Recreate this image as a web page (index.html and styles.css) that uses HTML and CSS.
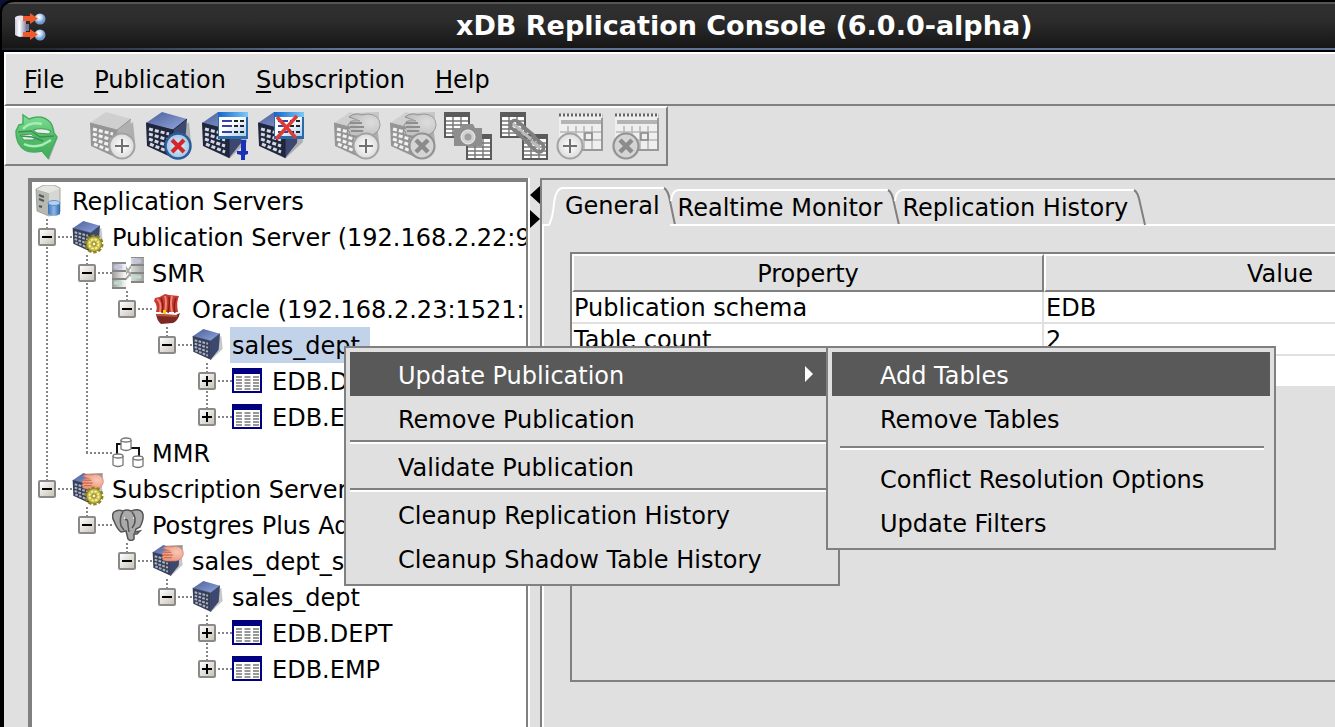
FILE: index.html
```html
<!DOCTYPE html>
<html lang="en">
<head>
<meta charset="utf-8">
<title>xDB Replication Console (6.0.0-alpha)</title>
<link rel="stylesheet" href="styles.css">
</head>
<body>
<svg class="defs" aria-hidden="true">
  <defs>
    <linearGradient id="gTopBlue" x1="0" y1="0" x2="1" y2="1"><stop offset="0" stop-color="#4a5f9c"/><stop offset="1" stop-color="#93a8dd"/></linearGradient>
    <linearGradient id="gGreen" x1="0" y1="0" x2="0" y2="1"><stop offset="0" stop-color="#7fe096"/><stop offset=".5" stop-color="#58bb6c"/><stop offset="1" stop-color="#3fae58"/></linearGradient>
    <linearGradient id="gBar" x1="0" y1="0" x2="1" y2="0"><stop offset="0" stop-color="#1467c8"/><stop offset="1" stop-color="#7cc8fb"/></linearGradient>
    <linearGradient id="gSheet" x1="0" y1="0" x2="1" y2="1"><stop offset=".4" stop-color="#fff"/><stop offset="1" stop-color="#a9cdf0"/></linearGradient>
    <linearGradient id="gMetal" x1="0" y1="0" x2="1" y2="0"><stop offset="0" stop-color="#9a9a9a"/><stop offset=".4" stop-color="#f4f4f4"/><stop offset="1" stop-color="#a2a2a2"/></linearGradient>
    <linearGradient id="gCyl" x1="0" y1="0" x2="1" y2="0"><stop offset="0" stop-color="#c5c5dc"/><stop offset=".4" stop-color="#fff"/><stop offset="1" stop-color="#8888a8"/></linearGradient>
    <linearGradient id="gBlueCyl" x1="0" y1="0" x2="1" y2="0"><stop offset="0" stop-color="#3c74b8"/><stop offset=".5" stop-color="#8db8e6"/><stop offset="1" stop-color="#2c66ac"/></linearGradient>
    <radialGradient id="gDisc"><stop offset="0" stop-color="#fff"/><stop offset="1" stop-color="#dcdcdc"/></radialGradient>
    <radialGradient id="gDiscBlue"><stop offset="0" stop-color="#e6f1fb"/><stop offset="1" stop-color="#9fc3e4"/></radialGradient>
    <radialGradient id="gBall" cx=".4" cy=".35"><stop offset="0" stop-color="#fff"/><stop offset=".5" stop-color="#c8dcf4"/><stop offset="1" stop-color="#6f9bd0"/></radialGradient>
    <radialGradient id="gPalm" cx=".7" cy=".4" r=".6"><stop offset="0" stop-color="#fff" stop-opacity=".45"/><stop offset="1" stop-color="#fff" stop-opacity="0"/></radialGradient>

    <symbol id="cube" viewBox="0 0 48 48">
      <path d="M28 47L46 30 44 10 32 20z" fill="#000" opacity=".22"/>
      <path class="cube-top" d="M1 11L17 0 42 7 28 18z"/>
      <path class="cube-side" d="M28 18L42 7 40 31 28 46z"/>
      <path class="cube-front" d="M1 11L28 18V46L2 34z"/>
      <g class="cube-windows"><path d="M4 17L24 22M4 22L24 28M4 27L24 34M5 32L24 40"/></g>
      <path class="cube-edge" d="M1 11L28 18 42 7M28 18V46"/>
    </symbol>
    <symbol id="hand" viewBox="0 0 48 48">
      <path class="hand-cuff" d="M22 1L46 0V17L38 19z"/>
      <path class="hand" d="M16 5Q22 0 29 3L35 2Q47 3 47 13 46 22 36 24L22 24Q14 23 17 20 12 18 17 16 13 13 17 11 16 8 27 9z"/>
      <path d="M16 5Q22 0 29 3L35 2Q47 3 47 13 46 22 36 24L22 24z" fill="url(#gPalm)"/>
      <path class="hand-line" d="M17 11L29 11M17 15L31 15M18 19L30 19"/>
    </symbol>
    <symbol id="plusDisc" viewBox="0 0 28 28">
      <circle cx="14" cy="14" r="12.5" fill="url(#gDisc)" stroke="#a2a2a2" stroke-width="2"/>
      <path d="M14 7V21M7 14H21" stroke="#707070" stroke-width="2"/>
    </symbol>
    <symbol id="crossDiscGray" viewBox="0 0 28 28">
      <circle cx="14" cy="14" r="12.5" fill="#d4d4d4" stroke="#939393" stroke-width="2.2"/>
      <path d="M8 8L20 20M20 8L8 20" stroke="#8b8b8b" stroke-width="4.5"/>
    </symbol>
    <symbol id="grid" viewBox="0 0 26 26">
      <path d="M0 0H26V26H0z" fill="#5b5b5b"/>
      <path d="M2 5H24V24H2z" fill="#fff"/>
      <path d="M2 9H24M2 13H24M2 17H24M2 21H24M9 5V24M17 5V24" stroke="#777" stroke-width="1.4"/>
    </symbol>
    <symbol id="calendar" viewBox="0 0 48 48">
      <path d="M3 3H47V40H3z" fill="#c4c4c4"/>
      <path d="M3 3H46V38H3z" fill="#efefef"/>
      <path d="M3 4H47" stroke="#666" stroke-width="3" stroke-dasharray="2 2"/>
      <path d="M5 9H45V13H5z" fill="#b4b4b4"/>
      <path d="M4 21H46M4 29H46M12 15V38M20 15V38M28 15V38M36 15V38" stroke="#b8b8b8" stroke-width="1.6"/>
      <path d="M46 7V39H4" fill="none" stroke="#999" stroke-width="2"/>
      <path d="M29 22H36V29H29z" fill="none" stroke="#888" stroke-width="1.5"/>
    </symbol>
    <symbol id="report" viewBox="0 0 30 27">
      <path d="M0 0H30V27H0z" fill="#2b6aa8"/>
      <path d="M0 0H30V5H0z" fill="url(#gBar)"/>
      <path d="M1 5H28V24H1z" fill="url(#gSheet)"/>
      <path d="M4 9H14M4 14H14M4 20H14" stroke="#3842a0" stroke-width="1.8"/>
      <path d="M16 9H20M22 9H26M16 14H20M22 14H26M16 20H20M22 20H26" stroke="#222" stroke-width="1.8"/>
    </symbol>
    <symbol id="gear" viewBox="0 0 20 20">
      <circle cx="10" cy="10" r="8" fill="none" stroke="#8d841d" stroke-width="3" stroke-dasharray="3.2 1.8"/>
      <circle cx="10" cy="10" r="7.4" fill="#c9bc48" stroke="#8d841d"/>
      <circle cx="10" cy="10" r="4.6" fill="none" stroke="#f6efae" stroke-width="1.8" stroke-dasharray="2.4 1.2"/>
      <circle cx="10" cy="10" r="2" fill="#fff9cf" stroke="#8d841d"/>
    </symbol>
    <symbol id="tableIcon" viewBox="0 0 32 32">
      <path d="M1 3H29V28H1z" fill="#fff"/>
      <path d="M0 3H30V9H0z" fill="#000080"/>
      <path d="M1 4V27H29V4" fill="none" stroke="#000080" stroke-width="2"/>
      <path d="M4 12H27M4 15H27M4 18H27M4 21H27M4 24H27" stroke="#777" stroke-width="1.4" stroke-dasharray="6 2.5"/>
    </symbol>
    <symbol id="serverIcon" viewBox="0 0 32 32">
      <path d="M4 4L12 0H22L28 3 18 8z" fill="#e4e6e2"/>
      <path d="M4 4L17 8V31L5 26z" fill="#b5b8b3"/>
      <path d="M17 8L28 3V27L17 31z" fill="#d5d7d3"/>
      <path d="M7 10L12 12M7 14L12 16M7 21L10 22" stroke="#555" stroke-width="2"/>
      <path d="M4 4L12 0H22L28 3V27L17 31 5 26z" fill="none" stroke="#92958f" stroke-width=".8"/>
      <path d="M16 18V29Q22 33 28 29V18z" fill="url(#gBlueCyl)"/>
      <ellipse cx="22" cy="18" rx="6" ry="2.5" fill="#b3d0ef" stroke="#4c83c0" stroke-width=".8"/>
    </symbol>
    <symbol id="smrIcon" viewBox="0 0 32 32">
      <path d="M13 18L20 8M13 23L20 15M13 9L20 20" stroke="#a8a8a8" stroke-width="2"/>
      <path d="M0 6H14V31H0zM19 0H32V25H19z" fill="url(#gMetal)"/>
      <path d="M0 6H14M19 0H32" stroke="#8c8c8c" stroke-width="2"/>
      <path d="M0 14H14M0 22H14M0 31H14M19 8H32M19 16H32M19 25H32" stroke="#858585" stroke-width="2"/>
      <path d="M2 10H10M21 4H29" stroke="#c0c4ea" stroke-width="3"/>
      <path d="M2 26H10M21 20H29" stroke="#b7e0cb" stroke-width="3"/>
    </symbol>
    <symbol id="oracleIcon" viewBox="0 0 32 32">
      <path d="M3 5Q9 4 13 1L17 2 27 3Q24 9 26 19H4Q6 12 2 8z" fill="#c6392f"/>
      <path d="M5 6Q10 9 8 19M13 3Q15 9 13 19M20 3Q18 10 20 19" stroke="#f08576" stroke-width="2" fill="none"/>
      <path d="M9 5Q12 11 10 20M17 4Q18 11 16 20M24 5Q21 12 23 20" stroke="#861c17" stroke-width="1.4" fill="none"/>
      <path d="M11 17H14V21H11z" fill="#ffd400"/>
      <path d="M4 21L24 22 28 20Q26 28 21 30L9 31Q5 28 4 21z" fill="#7c2a21"/>
      <path d="M5 22L25 23" stroke="#b7533f" stroke-width="2"/>
    </symbol>
    <symbol id="mmrIcon" viewBox="0 0 32 32">
      <path d="M9 7H5V17M19 11H27V20" fill="none" stroke="#111" stroke-width="2"/>
      <g fill="#fff" stroke="#777" stroke-width="1.3">
        <path d="M9 3V12Q14 15 19 12V3M1 19V28Q6 31 11 28V19M21 21V29Q26 32 31 29V21"/>
        <ellipse cx="14" cy="3" rx="5" ry="2"/><ellipse cx="6" cy="19" rx="5" ry="2"/><ellipse cx="26" cy="21" rx="5" ry="2"/>
      </g>
    </symbol>
    <symbol id="elephantIcon" viewBox="0 0 32 32">
      <path d="M2 3Q6 0 11 2 15 0 19 2 27-1 30 3 33 8 28 18L24 20 23 23 28 22 25 25 22 25 22 30Q19 33 16 30L14 22 9 23Q5 20 2 12-1 7 2 3z" fill="#aaa" stroke="#555" stroke-width="1.5"/>
      <path d="M11 3Q7 8 9 17L12 21M20 3Q25 9 22 16L20 19M13 11Q16 9 16 16L17 23" fill="none" stroke="#555" stroke-width="1.5"/>
      <path d="M12 9H13M21 9H22" stroke="#fff" stroke-width="1.6"/>
    </symbol>
  </defs>
</svg>

<div class="window">
  <header class="titlebar">
    <svg class="app-icon" viewBox="0 0 32 30" aria-hidden="true">
      <path d="M1 6V23Q7 27 12 23V6z" fill="url(#gCyl)"/>
      <ellipse cx="6.500" cy="6" rx="5.500" ry="2.500" fill="#e6e6f2"/>
      <path d="M12 12V19H15V12z" fill="#777799"/>
      <circle cx="26" cy="7" r="5.500" fill="url(#gBall)"/><circle cx="26" cy="23" r="5.500" fill="url(#gBall)"/>
      <path d="M9 4H16V1L24 6.500 16 12V9H9zM9 20H16V17L24 22.500 16 28V25H9z" fill="#f0592a"/>
    </svg>
    <h1 class="title">xDB Replication Console (6.0.0-alpha)</h1>
  </header>

  <div class="client">
    <nav class="menubar" aria-label="Main menu">
      <button type="button"><u>F</u>ile</button>
      <button type="button"><u>P</u>ublication</button>
      <button type="button"><u>S</u>ubscription</button>
      <button type="button"><u>H</u>elp</button>
    </nav>

    <div class="toolbar" role="toolbar" aria-label="Tools">
      <div class="tool-group">
        <button type="button" aria-label="Refresh">
          <svg viewBox="0 0 48 48">
            <path d="M30 41L45 25 36 48z" fill="#000" opacity=".25"/>
            <path d="M3 19L6 13 10 12 10 3 16 7Q29 2 37 10 40 14 41 21L44 25 39 36 35 46 29 39Q12 43 6 32 3 27 3 19z" fill="url(#gGreen)" stroke="#46ad60" stroke-width="1.500"/>
            <path d="M20 18Q29 15 38 19L36 22 24 21z" fill="#e8eee9" stroke="#3c9c55"/>
            <path d="M7 23L18 22 23 26 20 28 11 28z" fill="#e8eee9" stroke="#3c9c55"/>
            <path d="M10 17Q17 9 29 12M11 32Q18 36 29 33L38 28" fill="none" stroke="#a5efb6" stroke-width="2.500"/>
            <path d="M5 20L18 19 27 25 41 24M8 24L19 25 30 29" fill="none" stroke="#35954e" stroke-width="1.500"/>
          </svg>
        </button>
      </div>
      <div class="tool-group">
        <button type="button" class="gray" aria-label="Create publication" disabled>
          <svg viewBox="0 0 48 48"><use href="#cube" width="48" height="48"/><use href="#plusDisc" x="19" y="20" width="28" height="28"/></svg>
        </button>
        <button type="button" class="navy" aria-label="Remove publication">
          <svg viewBox="0 0 48 48"><use href="#cube" width="48" height="48"/>
            <circle cx="33" cy="34" r="12.500" fill="url(#gDiscBlue)" stroke="#295c9a" stroke-width="2.500"/>
            <path d="M27 28L39 40M39 28L27 40" stroke="#d3262a" stroke-width="4"/></svg>
        </button>
        <button type="button" class="navy" aria-label="Update publication">
          <svg viewBox="0 0 48 48"><use href="#cube" width="48" height="48"/><use href="#report" x="17" y="0" width="30" height="27"/>
            <path d="M40 28H45V39H47V42L44 43V48H40V43L36 42V39H40z" fill="#1a30b8"/></svg>
        </button>
        <button type="button" class="navy" aria-label="Discard update">
          <svg viewBox="0 0 48 48"><use href="#cube" width="48" height="48"/><use href="#report" x="17" y="0" width="30" height="27"/>
            <path d="M20 5L39 26M40 4L19 27" stroke="#dc3b36" stroke-width="3.500"/></svg>
        </button>
      </div>
      <div class="tool-group">
        <button type="button" class="gray" aria-label="Create subscription" disabled>
          <svg viewBox="0 0 48 48"><use href="#cube" width="48" height="48"/><use href="#hand" width="48" height="48"/><use href="#plusDisc" x="19" y="20" width="28" height="28"/></svg>
        </button>
        <button type="button" class="gray" aria-label="Remove subscription" disabled>
          <svg viewBox="0 0 48 48"><use href="#cube" width="48" height="48"/><use href="#hand" width="48" height="48"/><use href="#crossDiscGray" x="19" y="20" width="28" height="28"/></svg>
        </button>
        <button type="button" aria-label="Snapshot" disabled>
          <svg viewBox="0 0 48 48"><use href="#grid" x="-1" y="0" width="26" height="26"/><use href="#grid" x="21" y="22" width="26" height="26"/>
            <path d="M9 16H16L18 12H28L30 16H37V34H9z" fill="#8e8e8e"/>
            <circle cx="23" cy="25" r="7" fill="#d2d2d2" stroke="#eee"/><circle cx="23" cy="25" r="3.500" fill="#a0a0a0"/></svg>
        </button>
        <button type="button" aria-label="Synchronize" disabled>
          <svg viewBox="0 0 48 48"><use href="#grid" x="-1" y="0" width="26" height="26"/><use href="#grid" x="21" y="22" width="26" height="26"/>
            <g fill="none" stroke="#808080" stroke-width="3.500"><rect x="9" y="11" width="17" height="9" rx="4" transform="rotate(40 17 15)"/><rect x="18" y="19" width="17" height="9" rx="4" transform="rotate(40 26 23)"/><rect x="27" y="28" width="17" height="9" rx="4" transform="rotate(40 35 32)"/></g>
            <path d="M12 12L21 19M21 20L30 27M30 29L39 36" stroke="#bcbcbc" stroke-width="3"/></svg>
        </button>
        <button type="button" aria-label="Configure schedule" disabled>
          <svg viewBox="0 0 48 48"><use href="#calendar" x="-1" y="-1" width="48" height="48"/><use href="#plusDisc" x="-1" y="20" width="28" height="28"/></svg>
        </button>
        <button type="button" aria-label="Remove schedule" disabled>
          <svg viewBox="0 0 48 48"><use href="#calendar" x="-1" y="-1" width="48" height="48"/><use href="#crossDiscGray" x="-1" y="20" width="28" height="28"/></svg>
        </button>
      </div>
    </div>

    <main class="split">
      <section class="tree-panel" aria-label="Replication tree">
        <div class="node"><svg class="icon" viewBox="0 0 32 32"><use href="#serverIcon"/></svg><span class="label">Replication Servers</span></div>
        <ul class="tree">
          <li>
            <div class="node"><button type="button" class="expander" aria-label="Collapse"></button><svg class="icon navy" viewBox="0 0 32 32"><use href="#cube" width="32" height="32"/><use href="#gear" x="12" y="13" width="20" height="20"/></svg><span class="label">Publication Server (192.168.2.22:9</span></div>
            <ul>
              <li>
                <div class="node"><button type="button" class="expander" aria-label="Collapse"></button><svg class="icon" viewBox="0 0 32 32"><use href="#smrIcon"/></svg><span class="label">SMR</span></div>
                <ul>
                  <li>
                    <div class="node"><button type="button" class="expander" aria-label="Collapse"></button><svg class="icon" viewBox="0 0 32 32"><use href="#oracleIcon"/></svg><span class="label">Oracle (192.168.2.23:1521:</span></div>
                    <ul>
                      <li>
                        <div class="node"><button type="button" class="expander" aria-label="Collapse"></button><svg class="icon navy" viewBox="0 0 32 32"><use href="#cube" width="32" height="32"/></svg><span class="label selected">sales_dept</span></div>
                        <ul>
                          <li><div class="node"><button type="button" class="expander closed" aria-label="Expand"></button><svg class="icon" viewBox="0 0 32 32"><use href="#tableIcon"/></svg><span class="label">EDB.DEPT</span></div></li>
                          <li><div class="node"><button type="button" class="expander closed" aria-label="Expand"></button><svg class="icon" viewBox="0 0 32 32"><use href="#tableIcon"/></svg><span class="label">EDB.EMP</span></div></li>
                        </ul>
                      </li>
                    </ul>
                  </li>
                </ul>
              </li>
              <li><div class="node leaf"><svg class="icon" viewBox="0 0 32 32"><use href="#mmrIcon"/></svg><span class="label">MMR</span></div></li>
            </ul>
          </li>
          <li>
            <div class="node"><button type="button" class="expander" aria-label="Collapse"></button><svg class="icon navy" viewBox="0 0 32 32"><use href="#cube" width="32" height="32"/><use href="#hand" width="32" height="32"/><use href="#gear" x="12" y="13" width="20" height="20"/></svg><span class="label">Subscription Server</span></div>
            <ul>
              <li>
                <div class="node"><button type="button" class="expander" aria-label="Collapse"></button><svg class="icon" viewBox="0 0 32 32"><use href="#elephantIcon"/></svg><span class="label">Postgres Plus Advanced</span></div>
                <ul>
                  <li>
                    <div class="node"><button type="button" class="expander" aria-label="Collapse"></button><svg class="icon navy" viewBox="0 0 32 32"><use href="#cube" width="32" height="32"/><use href="#hand" width="32" height="32"/></svg><span class="label">sales_dept_sub</span></div>
                    <ul>
                      <li>
                        <div class="node"><button type="button" class="expander" aria-label="Collapse"></button><svg class="icon navy" viewBox="0 0 32 32"><use href="#cube" width="32" height="32"/></svg><span class="label">sales_dept</span></div>
                        <ul>
                          <li><div class="node"><button type="button" class="expander closed" aria-label="Expand"></button><svg class="icon" viewBox="0 0 32 32"><use href="#tableIcon"/></svg><span class="label">EDB.DEPT</span></div></li>
                          <li><div class="node"><button type="button" class="expander closed" aria-label="Expand"></button><svg class="icon" viewBox="0 0 32 32"><use href="#tableIcon"/></svg><span class="label">EDB.EMP</span></div></li>
                        </ul>
                      </li>
                    </ul>
                  </li>
                </ul>
              </li>
            </ul>
          </li>
        </ul>
      </section>

      <div class="divider">
        <button type="button" aria-label="Hide tree"><svg viewBox="0 0 10 18"><path d="M10 0V18L0 9z"/></svg></button>
        <button type="button" aria-label="Expand tree"><svg viewBox="0 0 10 18"><path d="M0 0V18L10 9z"/></svg></button>
      </div>

      <section class="detail">
        <div class="tabs" role="tablist">
          <button type="button" class="tab active" role="tab" aria-selected="true">
            <svg class="cap-active" viewBox="0 0 14 38"><path d="M0 38Q4 30 5 16 7 1 14 1" class="lit"/></svg>
            <span>General</span>
            <svg class="cap-right" viewBox="0 0 12 38"><path d="M0 1Q4 3 6 14L11 38" class="dim"/></svg>
          </button>
          <button type="button" class="tab" role="tab">
            <svg class="cap-left" viewBox="0 0 8 36"><path d="M1 12Q2 2 8 1" class="lit"/></svg>
            <span>Realtime Monitor</span>
            <svg class="cap-right" viewBox="0 0 12 36"><path d="M0 1Q4 3 6 14L11 36" class="dim"/></svg>
          </button>
          <button type="button" class="tab" role="tab">
            <svg class="cap-left" viewBox="0 0 8 36"><path d="M1 12Q2 2 8 1" class="lit"/></svg>
            <span>Replication History</span>
            <svg class="cap-right" viewBox="0 0 12 36"><path d="M0 1Q4 3 6 14L11 36" class="dim"/></svg>
          </button>
          <div class="tab-rest"></div>
        </div>
        <div class="table-area">
          <table class="props">
            <thead><tr><th scope="col">Property</th><th scope="col">Value</th></tr></thead>
            <tbody>
              <tr><td>Publication schema</td><td>EDB</td></tr>
              <tr><td>Table count</td><td>2</td></tr>
              <tr><td></td><td></td></tr>
            </tbody>
          </table>
        </div>
      </section>
    </main>
  </div>
</div>

<div class="popup context-menu" role="menu">
  <button type="button" role="menuitem" class="current">Update Publication<svg class="arrow" viewBox="0 0 10 16"><path d="M1 0L9 8 1 16z"/></svg></button>
  <button type="button" role="menuitem">Remove Publication</button>
  <hr>
  <button type="button" role="menuitem">Validate Publication</button>
  <hr>
  <button type="button" role="menuitem">Cleanup Replication History</button>
  <button type="button" role="menuitem">Cleanup Shadow Table History</button>
  <div class="popup submenu" role="menu">
    <button type="button" role="menuitem" class="current">Add Tables</button>
    <button type="button" role="menuitem">Remove Tables</button>
    <hr>
    <button type="button" role="menuitem">Conflict Resolution Options</button>
    <button type="button" role="menuitem">Update Filters</button>
  </div>
</div>
</body>
</html>
```

FILE: styles.css
```css
:root {
  --face: #e0e0e0;
  --line: #808080;
  --select: #c2d3e9;
  --current: #595959;
}

* { box-sizing: border-box; }

body {
  margin: 0;
  height: 100vh;
  overflow: hidden;
  background: #0b1238;
  color: #000;
  font: 24px/28px "DejaVu Sans", sans-serif;
}

button {
  margin: 0;
  padding: 0;
  border: 0;
  background: none;
  color: inherit;
  font: inherit;
  text-align: left;
  white-space: nowrap;
}

svg { display: block; flex: none; overflow: visible; }
.defs { position: absolute; width: 0; height: 0; }

/* Window frame */
.window {
  display: flex;
  flex-direction: column;
  height: 100%;
  padding-left: 4px;
  border-radius: 12px 0 0 0;
  background: #000;
  overflow: hidden;
}

.titlebar {
  display: flex;
  align-items: center;
  flex: none;
  height: 52px;
  margin-left: -2px;
  border-top: 2px solid #000;
  border-bottom: 2px solid #000;
  border-radius: 12px 0 0 0;
  background:
    linear-gradient(to right, #1a1f28, #5b7498 340px) 0 100% / 100% 2px no-repeat,
    linear-gradient(#555 0 2px, #303030 2px, #2c2c2c 40%, #141414);
}

.app-icon { width: 32px; height: 30px; margin: 2px 0 0 12px; }

.title {
  flex: none;
  margin: 0 0 0 410px;
  color: #fff;
  font-size: 27px;
  font-weight: bold;
  line-height: 32px;
  white-space: nowrap;
}

.client {
  display: flex;
  flex-direction: column;
  flex: 1;
  min-height: 0;
  background: var(--face);
}

.menubar {
  display: flex;
  flex: none;
  height: 54px;
  padding-left: 3px;
  border: solid #fff;
  border-width: 2px 0 0 2px;
  border-bottom: 2px solid var(--line);
}
.menubar button { padding: 2px 15px 0; }
.menubar u { text-decoration-thickness: 2px; text-underline-offset: 3px; text-decoration-skip-ink: none; }

/* Toolbar */
.toolbar {
  display: flex;
  align-self: flex-start;
  flex: none;
  gap: 20px;
  height: 60px;
  padding: 4px 1px 0 3px;
  border: 2px solid var(--line);
  border-top-color: #fff;
  border-left-color: #fff;
}
.tool-group { display: flex; }
.tool-group button { width: 56px; height: 48px; padding-left: 4px; }
.tool-group svg { width: 48px; height: 48px; }

/* Icon palettes */
.gray {
  --top: #cfcfcf;
  --side: #b0b0b0;
  --front: #959595;
  --edge: #969696;
  --win: #f2f2f2;
  --hand: #c2c2c2;
  --hand-line: #8e8e8e;
  --cuff: #c6c6c6;
}
.navy {
  --top: url(#gTopBlue);
  --side: #3c4870;
  --front: #20273d;
  --edge: #1b2034;
  --win: #d4d8e2;
  --hand: #ef9a80;
  --hand-line: #cf7159;
  --cuff: #999;
}
.icon.navy { --front: #363f5a; --edge: #2a3350; --win: #aeb2bf; }

.cube-top { fill: var(--top); }
.cube-side { fill: var(--side); }
.cube-front { fill: var(--front); }
.cube-edge { fill: none; stroke: var(--edge); stroke-width: 1; }
.cube-windows { fill: none; stroke: var(--win); stroke-width: 3; stroke-dasharray: 4 2; }
.hand { fill: var(--hand); stroke: var(--hand-line); stroke-width: 1; }
.hand-line { fill: none; stroke: var(--hand-line); stroke-width: 2; }
.hand-cuff { fill: var(--cuff); }

/* Split pane */
.split {
  display: flex;
  flex: 1;
  min-height: 0;
  padding: 12px 0 0 24px;
}

.tree-panel {
  flex: none;
  width: 500px;
  padding-top: 1px;
  border: solid var(--line);
  border-width: 4px 2px 0 4px;
  background: #fff;
  overflow: hidden;
}

.tree-panel ul { margin: 0; padding: 0; list-style: none; }
.tree-panel li {
  padding-left: 40px;
  background: repeating-linear-gradient(#858585 0 2px, transparent 2px 4px) 14px 0 / 2px 100% no-repeat;
}
.tree-panel li:last-child { background-size: 2px 18px; }
.tree-panel li > .node {
  margin-left: -40px;
  padding-left: 6px;
  background: repeating-linear-gradient(to right, #858585 0 2px, transparent 2px 4px) 14px 17px / 26px 2px no-repeat;
}
.tree-panel li > .leaf { padding-left: 40px; }

.node { display: flex; align-items: center; height: 36px; white-space: nowrap; }
.icon { width: 32px; height: 32px; }
.label { margin-left: 6px; padding: 5px 2px 3px; }
.selected { padding-right: 10px; background: var(--select); }

.expander {
  flex: none;
  width: 18px;
  height: 18px;
  margin-right: 16px;
  border: 2px solid #8a8a8a;
  border-radius: 2px;
  background:
    linear-gradient(#000, #000) center / 10px 2px no-repeat,
    linear-gradient(135deg, #fff, #c9c3b8);
}
.expander.closed {
  background:
    linear-gradient(#000, #000) center / 10px 2px no-repeat,
    linear-gradient(#000, #000) center / 2px 10px no-repeat,
    linear-gradient(135deg, #fff, #c9c3b8);
}

.divider {
  display: flex;
  flex: none;
  flex-direction: column;
  gap: 6px;
  width: 12px;
  padding-top: 8px;
  border-left: 2px solid #fff;
}
.divider svg { width: 10px; height: 18px; }

/* Detail pane */
.detail {
  flex: 1;
  min-width: 0;
  border: solid var(--line);
  border-width: 2px 0 0 2px;
  box-shadow: inset 2px 0 #fff;
  overflow: hidden;
}

.tabs {
  display: flex;
  align-items: flex-end;
  height: 46px;
  padding-left: 7px;
  background:
    linear-gradient(#fff, #fff) 0 100% / 7px 2px no-repeat,
    linear-gradient(var(--face), var(--face)) 0 0 / 2px 44px no-repeat;
}
.tab { display: flex; height: 37px; margin-left: -6px; border-bottom: 2px solid #fff; }
.tab span { padding-right: 6px; border-top: 2px solid #fff; line-height: 35px; }
.tab.active { height: 39px; margin-left: 0; border-bottom-color: transparent; }
.tab.active span { padding: 0 4px 0 2px; }
.cap-active { width: 14px; height: 38px; }
.cap-left { width: 8px; height: 36px; }
.cap-right { width: 12px; height: 36px; }
.tab.active .cap-right { height: 38px; }
.tab-rest { flex: 1; border-bottom: 2px solid #fff; }
.lit, .dim { fill: none; stroke: #fff; stroke-width: 2; }
.dim { stroke: var(--line); }

.table-area {
  height: 430px;
  margin: 26px 0 0 28px;
  border: 2px solid var(--line);
  border-right: 0;
  overflow: hidden;
}

.props { width: 944px; table-layout: fixed; border-spacing: 0; background: #fff; }
.props th {
  height: 38px;
  padding: 2px 0 0;
  border: 2px solid;
  border-color: #fff var(--line) var(--line) #fff;
  background: var(--face);
  font-weight: normal;
}
.props td {
  height: 32px;
  padding: 2px 2px 0;
  border: solid var(--face);
  border-width: 0 2px 2px 0;
}

/* Popup menus */
.popup {
  position: absolute;
  display: flex;
  flex-direction: column;
  padding: 4px;
  border: 2px solid var(--line);
  background: var(--face);
}
.popup button {
  display: flex;
  align-items: center;
  justify-content: space-between;
  height: 44px;
  padding: 4px 20px 0 48px;
}
.popup .current { background: var(--current); color: #fff; }
.popup hr { width: 100%; height: 4px; margin: 0; border: solid; border-width: 2px 0; border-color: var(--line) transparent #fff; }
.context-menu { top: 346px; left: 344px; width: 496px; }
.submenu { top: -2px; left: 480px; width: 450px; }
.submenu hr { width: auto; margin: 6px 6px 6px 8px; }
.arrow { width: 10px; height: 16px; margin-bottom: 4px; fill: #fff; }
```
